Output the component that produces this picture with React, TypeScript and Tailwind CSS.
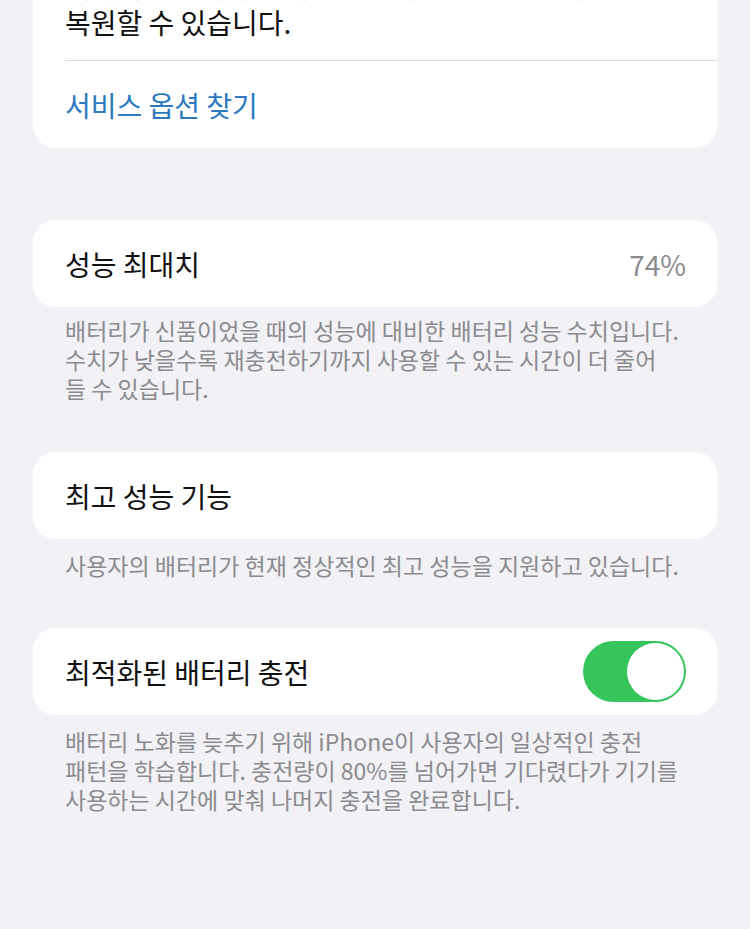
import React from "react";

const font = { fontFamily: '"Noto Sans CJK KR", "Noto Sans", sans-serif' };

function Card({ children, className = "" }: { children: React.ReactNode; className?: string }) {
  return <div className={`mx-[33px] rounded-[22px] bg-white ${className}`}>{children}</div>;
}

function Row({ children }: { children: React.ReactNode }) {
  return (
    <div className="flex h-[87px] items-center justify-between pl-[32px] pr-[31px] text-[28px] leading-none text-[#111111]">
      {children}
    </div>
  );
}

function Footer({ lines, className = "" }: { lines: string[]; className?: string }) {
  return (
    <div className={`px-[65px] text-[23px] leading-[29px] text-[#8b8b8f] ${className}`}>
      {lines.map((l, i) => (
        <div key={i} className="whitespace-nowrap">
          {l}
        </div>
      ))}
    </div>
  );
}

function Toggle() {
  return (
    <div className="flex h-[61px] w-[103px] items-center justify-end rounded-full bg-[#35c55a] p-[2px]">
      <div className="h-[57px] w-[57px] rounded-full bg-white" />
    </div>
  );
}

export default function App() {
  return (
    <div className="h-[929px] w-[750px] overflow-hidden bg-[#f1f1f6]" style={font}>
      <Card className="mt-[-44px]">
        <div className="pl-[32px] pr-[31px] pt-[12px] pb-[20px] text-[28px] leading-[36px] text-[#111111]">
          <div className="whitespace-nowrap text-[#111111]/40">배터리를 교체하면 최고 성능과 용량을 완전히</div>
          <div className="whitespace-nowrap">복원할 수 있습니다.</div>
        </div>
        <div className="ml-[32px] h-px bg-[#dcdce0]" />
        <div className="flex h-[87px] items-center pl-[32px] text-[28px] leading-none text-[#2c79bf]">
          서비스 옵션 찾기
        </div>
      </Card>

      <Card className="mt-[72px]">
        <Row>
          <span>성능 최대치</span>
          <span className="text-[#8b8b8f]">74%</span>
        </Row>
      </Card>
      <Footer
        className="pt-[9px]"
        lines={[
          "배터리가 신품이었을 때의 성능에 대비한 배터리 성능 수치입니다.",
          "수치가 낮을수록 재충전하기까지 사용할 수 있는 시간이 더 줄어",
          "들 수 있습니다.",
        ]}
      />

      <Card className="mt-[49px]">
        <Row>
          <span>최고 성능 기능</span>
        </Row>
      </Card>
      <Footer className="pt-[12px]" lines={["사용자의 배터리가 현재 정상적인 최고 성능을 지원하고 있습니다."]} />

      <Card className="mt-[48px]">
        <Row>
          <span>최적화된 배터리 충전</span>
          <Toggle />
        </Row>
      </Card>
      <Footer
        className="pt-[12px]"
        lines={[
          "배터리 노화를 늦추기 위해 iPhone이 사용자의 일상적인 충전",
          "패턴을 학습합니다. 충전량이 80%를 넘어가면 기다렸다가 기기를",
          "사용하는 시간에 맞춰 나머지 충전을 완료합니다.",
        ]}
      />
    </div>
  );
}
